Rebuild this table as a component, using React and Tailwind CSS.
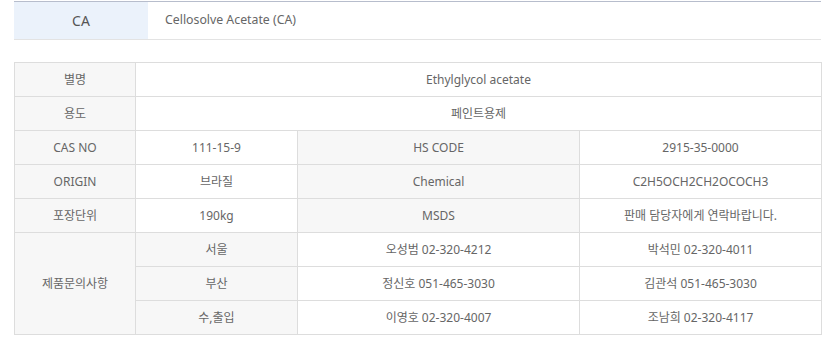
import React from 'react'

const font = { fontFamily: '"Noto Sans", "Noto Sans CJK KR", sans-serif' }

const contacts = [
  { region: '서울', a: '오성범 02-320-4212', b: '박석민 02-320-4011' },
  { region: '부산', a: '정신호 051-465-3030', b: '김관석 051-465-3030' },
  { region: '수,출입', a: '이영호 02-320-4007', b: '조남희 02-320-4117' },
]

const App = () => {
  const th = 'h-[34px] border border-[#dddddd] bg-[#f7f7f7] text-center font-normal p-0'
  const td = 'h-[34px] border border-[#dddddd] bg-white text-center p-0'

  return (
    <div className="w-[837px] h-[348px] bg-white pl-[14px] pt-px text-[12px] text-[#666666]" style={font}>
      {/* product title */}
      <div className="w-[807px] flex border-t border-b border-t-[#b7bdcc] border-b-[#e3e3e3]">
        <div className="w-[134px] h-[37px] bg-[#ebf2fb] flex items-center justify-center text-[14px] text-[#555555]">CA</div>
        <div className="h-[37px] flex items-center pl-[17px] text-[12.3px] text-[#666666]">Cellosolve Acetate (CA)</div>
      </div>

      {/* spec table */}
      <table className="mt-[22px] w-[807px] table-fixed border-collapse">
        <colgroup>
          <col className="w-[121px]" />
          <col className="w-[162px]" />
          <col className="w-[282px]" />
          <col className="w-[242px]" />
        </colgroup>
        <tbody>
          <tr>
            <th className={th}>별명</th>
            <td className={td} colSpan={3}>Ethylglycol acetate</td>
          </tr>
          <tr>
            <th className={th}>용도</th>
            <td className={td} colSpan={3}>페인트용제</td>
          </tr>
          <tr>
            <th className={th}>CAS NO</th>
            <td className={td}>111-15-9</td>
            <th className={th}>HS CODE</th>
            <td className={td}>2915-35-0000</td>
          </tr>
          <tr>
            <th className={th}>ORIGIN</th>
            <td className={td}>브라질</td>
            <th className={th}>Chemical</th>
            <td className={td}>C2H5OCH2CH2OCOCH3</td>
          </tr>
          <tr>
            <th className={th}>포장단위</th>
            <td className={td}>190kg</td>
            <th className={th}>MSDS</th>
            <td className={td}>판매 담당자에게 연락바랍니다.</td>
          </tr>
          {contacts.map((c, i) => (
            <tr key={c.region}>
              {i === 0 && (
                <th className={th} rowSpan={3}>제품문의사항</th>
              )}
              <th className={th}>{c.region}</th>
              <td className={td}>{c.a}</td>
              <td className={td}>{c.b}</td>
            </tr>
          ))}
        </tbody>
      </table>
    </div>
  )
}

export default App
